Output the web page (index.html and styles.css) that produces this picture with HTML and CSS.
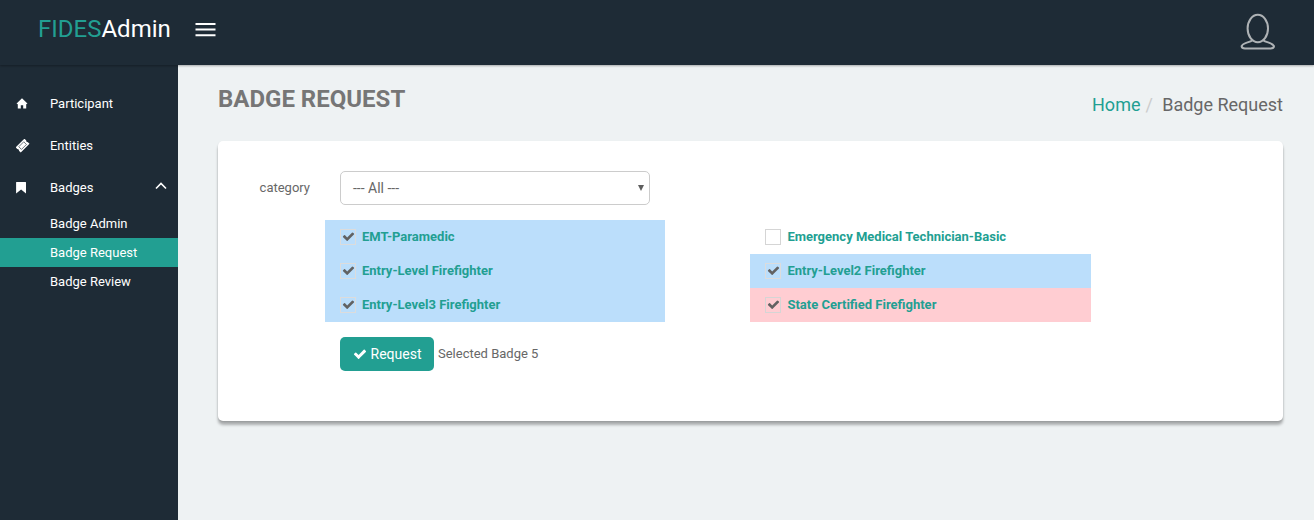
FILE: index.html
```html
<!DOCTYPE html>
<html lang="en">
<head>
<meta charset="utf-8">
<title>Badge Request</title>
<link rel="stylesheet" href="styles.css">
</head>
<body>
<svg class="sprite" aria-hidden="true">
  <symbol id="check" viewBox="0 0 1792 1792"><path d="M1671 566q0 40-28 68l-724 724-136 136q-28 28-68 28t-68-28l-136-136-362-362q-28-28-28-68t28-68l136-136q28-28 68-28t68 28l294 295 656-657q28-28 68-28t68 28l136 136q28 28 28 68z" fill="currentColor"/></symbol>
</svg>
<header class="topbar">
  <a class="brand"><span class="brand-accent">FIDES</span>Admin</a>
  <svg class="burger" width="21" height="14" viewBox="0 0 21 14"><path d="M.5 1h20M.5 6.500h20M.5 12.300h20" stroke="#fff" stroke-width="2"/></svg>
  <svg class="avatar" width="36" height="38" viewBox="0 0 36 38"><g fill="none" stroke="#aeb2b5" stroke-width="2"><ellipse cx="17.800" cy="15.500" rx="10.200" ry="13.700"/><path d="M12.500 27.200C9 29.800 3 29.500 1.600 33.200Q1.800 35.500 5 35.500H30.500Q33.800 35.500 34 33.200C32.600 29.500 26.600 29.800 23.100 27.200"/></g></svg>
</header>
<div class="shell">
  <nav class="sidebar">
    <a class="item"><svg class="item-icon" width="12" height="12" viewBox="0 0 12 12"><path d="M6 .3 11.400 5.400 10.800 6.200 10.200 5.700V10.600H7.200V7.200H4.800V10.600H1.800V5.700L1.200 6.200 .6 5.400Z" fill="#fff"/></svg><span>Participant</span></a>
    <a class="item"><svg class="item-icon" width="14" height="14" viewBox="0 0 14 14"><g transform="translate(6.600 6.600) rotate(-45)"><path d="M-6.200-3.600H6.200V-1.300Q4.900 0 6.200 1.300V3.600H-6.200V1.300Q-4.900 0-6.200-1.300Z" fill="#fff"/><rect x="-3.500" y="-1.900" width="7" height="3.800" fill="none" stroke="#1e2b36" stroke-width=".6"/></g></svg><span>Entities</span></a>
    <a class="item"><svg class="item-icon" width="12" height="12" viewBox="0 0 12 12"><path d="M.4 0H9.600Q10 0 10 .6V11.500L5.100 7.500 .1 11.500V.6Q.1 0 .4 0Z" fill="#fff"/></svg><span>Badges</span><svg class="chevron" width="12" height="8" viewBox="0 0 12 8"><path d="M1 6.500 6 1.500 11 6.500" fill="none" stroke="#fff" stroke-width="1.600"/></svg></a>
    <div class="submenu">
      <a class="sub">Badge Admin</a>
      <a class="sub active">Badge Request</a>
      <a class="sub">Badge Review</a>
    </div>
  </nav>
  <main class="content">
    <div class="page-head">
      <h1 class="title">BADGE REQUEST</h1>
      <div class="crumbs"><a class="crumb-link">Home</a><span class="slash">/</span><span>Badge Request</span></div>
    </div>
    <section class="card">
      <div class="field">
        <label class="field-label">category</label>
        <div class="select"><span>--- All ---</span><svg width="6" height="6" viewBox="0 0 6 6"><path d="M0 0H6L3 6Z" fill="#5e5e5e"/></svg></div>
      </div>
      <div class="options">
        <div class="option blue"><span class="box"><svg class="tick"><use href="#check"/></svg></span>EMT-Paramedic</div>
        <div class="option"><span class="box"></span>Emergency Medical Technician-Basic</div>
        <div class="option blue"><span class="box"><svg class="tick"><use href="#check"/></svg></span>Entry-Level Firefighter</div>
        <div class="option blue"><span class="box"><svg class="tick"><use href="#check"/></svg></span>Entry-Level2 Firefighter</div>
        <div class="option blue"><span class="box"><svg class="tick"><use href="#check"/></svg></span>Entry-Level3 Firefighter</div>
        <div class="option pink"><span class="box"><svg class="tick"><use href="#check"/></svg></span>State Certified Firefighter</div>
      </div>
      <div class="actions">
        <button class="request"><svg class="request-icon"><use href="#check"/></svg>Request</button>
        <span>Selected Badge 5</span>
      </div>
    </section>
  </main>
</div>
</body>
</html>
```
FILE: styles.css
```css
* { box-sizing: border-box; }
body {
  margin: 0;
  height: 520px;
  overflow: hidden;
  font: 13px/20px Roboto, sans-serif;
  color: #676767;
  background: #eef2f3;
}
.sprite { display: none; }
.topbar {
  position: relative;
  height: 65px;
  display: flex;
  align-items: flex-start;
  padding: 0 38px;
  background: #1e2b36;
  box-shadow: 0 1px 2px rgba(0, 0, 0, .3);
}
.brand { width: 157px; padding-top: 14px; font-size: 24px; line-height: 30px; color: #fff; }
.brand-accent { color: #229f92; }
.burger { margin-top: 23px; }
.avatar { margin: 13px 0 0 auto; }
.shell { display: flex; height: 455px; }
.sidebar { width: 178px; padding-top: 18px; background: #1e2b36; color: #fff; }
.item { display: flex; align-items: center; height: 42px; padding: 0 12px 0 16px; }
.item-icon { flex: none; margin: 0 22px 0 0; }
.item-icon[width="14"] { margin-right: 20px; }
.item span { flex: 1; }
.item .chevron { margin: -5px -1px 0 0; }
.item { padding-left: 15.600px; }
.item span { margin-left: .4px; }
.sub { display: block; height: 29px; padding-left: 50px; line-height: 29px; }
.submenu .active { background: #229f92; }
.content { flex: 1; padding: 0 31px 0 40px; }
.page-head { display: flex; justify-content: space-between; height: 76px; }
.title { margin: 19px 0 0; font-size: 24px; line-height: 30px; font-weight: 700; color: #767676; }
.crumbs { padding-top: 27px; font-size: 18px; line-height: 26px; }
.crumb-link { color: #229f92; }
.slash { padding: 0 9.300px 0 5px; color: #ccc; }
.card {
  height: 280px;
  padding-top: 30px;
  border-radius: 5px;
  background: #fff;
  box-shadow: 0 4px 3px rgba(0, 0, 0, .28), 0 1px 2px rgba(0, 0, 0, .12);
}
.field { display: flex; height: 34px; }
.field-label { width: 122px; padding: 7px 30px 0 0; text-align: right; }
.select {
  display: flex;
  align-items: center;
  justify-content: space-between;
  width: 310px;
  padding: 0 5px 0 12px;
  border: 1px solid #ccc;
  border-radius: 5px;
  font-size: 14px;
}
.options {
  display: grid;
  grid-template-columns: 340.400px 340.400px;
  column-gap: 85px;
  margin: 15px 0 0 107px;
}
.option {
  display: flex;
  align-items: center;
  height: 34px;
  padding-left: 15px;
  font-weight: 700;
  color: #229f92;
}
.blue { background: #bbdefb; }
.pink { background: #ffcdd2; }
.box { width: 16px; height: 16px; margin-right: 6px; border: 1px solid #d5d5d5; }
.blue .box { border-color: #dcdcdc; }
.tick { display: block; width: 13px; height: 13px; margin: 0 .5px; color: #626262; }
.actions { display: flex; align-items: center; margin: 15px 0 0 122px; gap: 4px; }
.request {
  display: flex;
  align-items: center;
  width: 94px;
  height: 34px;
  padding: 0 0 0 13px;
  border: 0;
  border-radius: 5px;
  background: #229f92;
  color: #fff;
  font: 14px/20px Roboto, sans-serif;
}
.request-icon { width: 14px; height: 14px; margin-right: 3.500px; }
```
